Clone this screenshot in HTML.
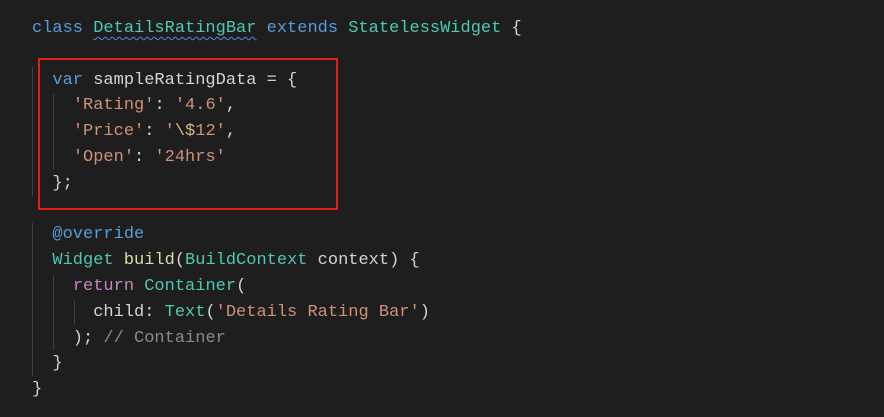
<!DOCTYPE html>
<html><head><style>
html,body{margin:0;padding:0;background:#1e1e1e;width:884px;height:417px;overflow:hidden}
.code{position:absolute;left:32px;top:16px;font-family:"Liberation Mono",monospace;font-size:17px;line-height:25.8px;color:#d4d4d4;white-space:pre}
.k{color:#569cd6}.t{color:#4ec9b0}.s{color:#ce9178}.e{color:#d7ba7d}.f{color:#dcdcaa}.p{color:#c586c0}.c{color:#8a8a8a}
.sq{text-decoration:underline wavy #4e8cd6;text-decoration-thickness:1px;text-underline-offset:4px}
.g{position:absolute;width:1px;background:#404040}
.box{position:absolute;left:38px;top:58px;width:296px;height:148px;border:2px solid #e51c1c}
</style></head><body>
<div class="g" style="left:32px;top:67px;height:129px"></div>
<div class="g" style="left:53px;top:94px;height:76px"></div>
<div class="g" style="left:32px;top:223px;height:153px"></div>
<div class="g" style="left:53px;top:275px;height:75px"></div>
<div class="g" style="left:74px;top:301px;height:24px"></div>
<div class="box"></div>
<div class="code"><span class="k">class</span> <span class="t sq">DetailsRatingBar</span> <span class="k">extends</span> <span class="t">StatelessWidget</span> {

  <span class="k">var</span> sampleRatingData = {
    <span class="s">'Rating'</span>: <span class="s">'4.6'</span>,
    <span class="s">'Price'</span>: <span class="s">'<span class="e">\$</span>12'</span>,
    <span class="s">'Open'</span>: <span class="s">'24hrs'</span>
  };

  <span class="k">@override</span>
  <span class="t">Widget</span> <span class="f">build</span>(<span class="t">BuildContext</span> context) {
    <span class="p">return</span> <span class="t">Container</span>(
      child: <span class="t">Text</span>(<span class="s">'Details Rating Bar'</span>)
    ); <span class="c">// Container</span>
  }
}</div>
</body></html>
